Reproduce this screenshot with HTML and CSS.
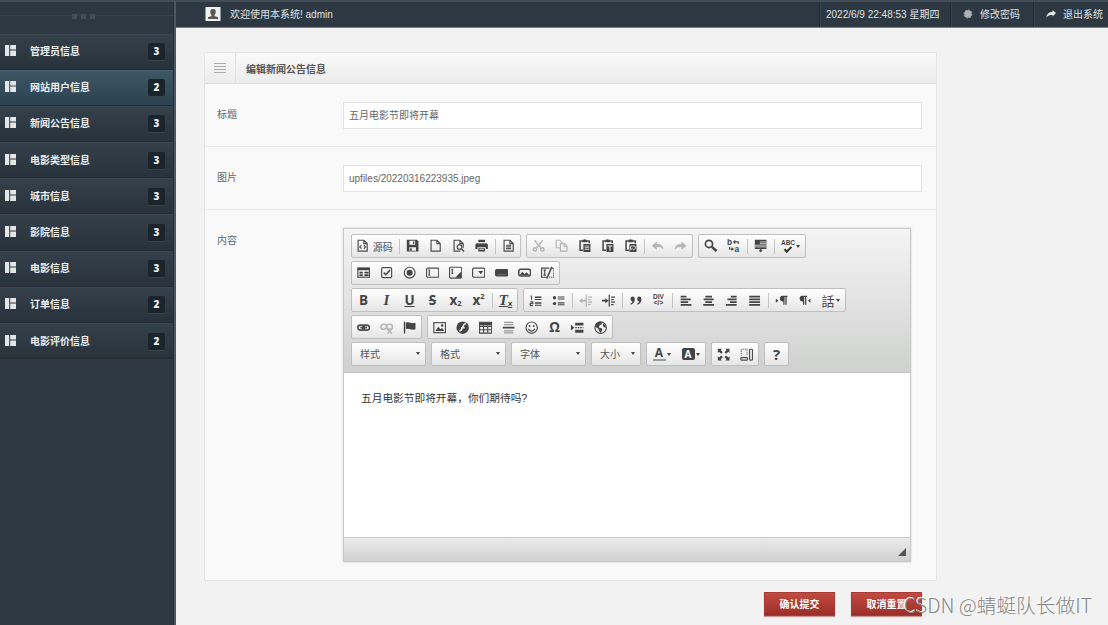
FILE: index.html
```html
<!DOCTYPE html>
<html lang="zh-CN">
<head>
  <meta charset="UTF-8">
  <title>编辑新闻公告信息</title>
  <link rel="stylesheet" href="styles.css">
</head>
<body>

  <!-- icon set -->
  <svg class="sprite" xmlns="http://www.w3.org/2000/svg">
    <symbol id="menu" viewBox="0 0 11 11"><path fill="#e3e5e6" d="M0 0h4.2v11H0zM5.2 0H11v4.5H5.2zM5.2 5.5H11V11H5.2z"/></symbol>
    <symbol id="source" viewBox="0 0 16 16"><path class="l" d="M2.5 1.5h7l4 4v9h-11zM9.5 1.5v4h4"/><path class="l" d="M6.5 7.5 4.5 9.5l2 2M9.5 7.5l2 2-2 2"/></symbol>
    <symbol id="save" viewBox="0 0 16 16"><path d="M1 1h12l2 2v12H1z"/><path fill="#f4f4f4" d="M4 2h7v5H4zM4 10h8v4H4z"/><path d="M8.5 3h1.5v3H8.500zM5 11h2v3H5z"/></symbol>
    <symbol id="newpage" viewBox="0 0 16 16"><path class="l" d="M2.500 1.500h7l4 4v9h-11zM9.500 1.500v4h4"/></symbol>
    <symbol id="preview" viewBox="0 0 16 16"><path class="l" d="M10 14.500H2.500v-13h7l4 4v5M9.500 1.500v4h4"/><circle class="l" cx="9" cy="9.500" r="2.800"/><path class="l b" d="m11 11.500 3.500 3.500"/></symbol>
    <symbol id="print" viewBox="0 0 16 16"><path d="M4 1h8v3H4zM2 5h12l1.500 1.500V12H13v-2H3v2H.5V6.500zM4 11h8v4H4z"/><path stroke="#eee" d="M5.500 12.500h5M4 4.500h8"/></symbol>
    <symbol id="template" viewBox="0 0 16 16"><path class="l" d="M2.500 1.500h7l4 4v9h-11zM9.500 1.500v4h4M5 7.500h6M5 9.500h6M5 11.500h6"/></symbol>
    <symbol id="cut" viewBox="0 0 16 16"><path class="l b" d="M3 1.500 11 11M13 1.500 5 11"/><circle class="l b" cx="3.500" cy="12.500" r="2"/><circle class="l b" cx="12.500" cy="12.500" r="2"/></symbol>
    <symbol id="copy" viewBox="0 0 16 16"><path class="l" d="M6 10.500H1.500v-9H6l3 3v1M6.500 5.500h5l3 3v6h-8zM11 5.500v3.500h3.500"/></symbol>
    <symbol id="paste" viewBox="0 0 16 16"><path class="l b" d="M5 2.500H2.500v11H6M11 2.500h2.500V5"/><path d="M5 1h2l1-1 1 1h2v3H5zM6.500 6h8.500v9.500H6.500z"/></symbol>
    <symbol id="paste1" viewBox="0 0 16 16"><use href="#paste"/><path stroke="#eee" d="M8 8.500h5.500M8 10.500h5.500M8 12.500h5.500"/></symbol>
    <symbol id="paste2" viewBox="0 0 16 16"><use href="#paste"/><path stroke="#eee" stroke-width="1.300" d="M8 8.500h5.500M10.800 8.500v5.500"/></symbol>
    <symbol id="paste3" viewBox="0 0 16 16"><use href="#paste"/><path fill="none" stroke="#eee" d="M8 8.500h5.500v3l-2 1.500-1.500-1.500-2 1.500z"/></symbol>
    <symbol id="undo" viewBox="0 0 16 16"><path d="M1 8l6-5v3c5 0 8 2 8 7-2-3-4-3.500-8-3.500V13z"/></symbol>
    <symbol id="redo" viewBox="0 0 16 16"><path d="M15 8 9 3v3c-5 0-8 2-8 7 2-3 4-3.500 8-3.500V13z"/></symbol>
    <symbol id="find" viewBox="0 0 16 16"><circle cx="6" cy="6" r="4.300" fill="none" stroke="#444" stroke-width="2"/><path stroke="#444" stroke-width="3" d="m9.500 9.500 5.500 5"/></symbol>
    <symbol id="replace" viewBox="0 0 16 16"><text class="letter" x="0" y="7.500">b</text><text class="letter" x="9" y="15.500">a</text><path class="l" d="M9 3.500h4.500V6M3 9.500V12h3"/><path d="M10 1v5L7 3.500zM5.500 9.500v5l3-2.500z"/></symbol>
    <symbol id="selall" viewBox="0 0 16 16"><path d="M1 1h14v11H1z"/><path stroke="#ddd" d="M7 3.500h8M7 5.500h8M1 7.500h14M1 9.500h14"/><path class="l b" d="M8 11v4M6.500 13.500 8 15l1.500-1.500"/></symbol>
    <symbol id="form" viewBox="0 0 16 16"><rect class="l" x="1" y="2.500" width="14" height="11"/><path d="M1 2h14v3H1zM3 7h4v2H3zM9 7h5v2H9zM3 10h4v2H3zM9 10h5v2H9z"/></symbol>
    <symbol id="checkbox" viewBox="0 0 16 16"><rect class="l" x="2" y="2" width="12" height="12" rx="1.500"/><path class="l b" d="m4.500 8 2.500 2.500L12 5"/></symbol>
    <symbol id="radio" viewBox="0 0 16 16"><circle class="l" cx="8" cy="8" r="6.500"/><circle cx="8" cy="8" r="3.600"/></symbol>
    <symbol id="textfield" viewBox="0 0 16 16"><rect class="l" x=".7" y="2.500" width="14.600" height="11" rx="1.500"/><path class="l" d="M3 5h2M3 11h2M4 5v6"/></symbol>
    <symbol id="textarea" viewBox="0 0 16 16"><rect class="l" x=".7" y="1.500" width="14.600" height="13" rx="1.500"/><path class="l" d="M3 4h2M4 4v5M3 9h2"/><path d="M14.500 7v7H7.500z"/></symbol>
    <symbol id="select" viewBox="0 0 16 16"><rect class="l" x=".7" y="2.500" width="14.600" height="11" rx="1.500"/><path d="M7.500 6h6l-3 4z"/></symbol>
    <symbol id="button" viewBox="0 0 16 16"><rect x="0" y="3.500" width="16" height="9" rx="2"/><path stroke="#777" d="M2 10.500h12"/></symbol>
    <symbol id="imgbutton" viewBox="0 0 16 16"><rect class="l b" x=".9" y="4" width="14.200" height="8" rx="2.500"/><path d="M2 11 5 7l3 3 2-2.500L14 11z"/></symbol>
    <symbol id="hidden" viewBox="0 0 16 16"><path class="l" d="M10 2.500H.7v11H7M3 5h3M4.500 5v6M3 11h3"/><path class="l" stroke-dasharray="1.500 1" d="M13 2.500h2.300v11H9"/><path class="l b" d="M13 1 7 15"/></symbol>
    <symbol id="ol" viewBox="0 0 16 16"><path class="l" d="M2 2.500h1V7M1.500 9.500h3v2h-3v2.500h3"/><path d="M7 3h8v1.800H7zM7 6h8v1.200H7zM7 10h8v1.800H7zM7 13h8v1.200H7z"/></symbol>
    <symbol id="ul" viewBox="0 0 16 16"><circle cx="3" cy="4.500" r="2"/><circle cx="3" cy="11.500" r="2"/><path d="M7 3h8v1.300H7zM7 5.300h8v1.300H7zM7 10h8v1.300H7zM7 12.300h8v1.300H7z"/></symbol>
    <symbol id="outdent" viewBox="0 0 16 16"><path d="M0 8l4-3v2h4v2H4v2zM8 1h1.500v14H8zM11 3h5v1.500h-5zM11 6h3v1.500h-3zM11 9h5v1.500h-5zM11 12h3v1.500h-3z"/></symbol>
    <symbol id="indent" viewBox="0 0 16 16"><path d="M8 8 4 5v2H0v2h4v2zM8 1h1.500v14H8zM11 3h5v1.500h-5zM11 6h3v1.500h-3zM11 9h5v1.500h-5zM11 12h3v1.500h-3z"/></symbol>
    <symbol id="quote" viewBox="0 0 16 16"><path d="M4 3a3 3 0 0 1 3 3c0 4-2 6-5 7v-1.500c1.500-.8 2-1.500 2-2.700a3 3 0 0 1 0-5.800zM12 3a3 3 0 0 1 3 3c0 4-2 6-5 7v-1.500c1.500-.8 2-1.500 2-2.700a3 3 0 0 1 0-5.800z"/></symbol>
    <symbol id="left" viewBox="0 0 16 16"><path d="M2 2h7v2.200H2zM2 5.300h12v2.200H2zM2 8.600h9v2.200H2zM2 11.900h13v2.200H2z"/></symbol>
    <symbol id="center" viewBox="0 0 16 16"><path d="M4 2h8v2.200H4zM2 5.300h12v2.200H2zM4 8.600h8v2.200H4zM1.500 11.900h13v2.200h-13z"/></symbol>
    <symbol id="right" viewBox="0 0 16 16"><path d="M7 2h7v2.200H7zM3 5.300h11v2.200H3zM6 8.600h8v2.200H6zM1 11.900h13v2.200H1z"/></symbol>
    <symbol id="justify" viewBox="0 0 16 16"><path d="M1.500 2h13v2.200h-13zM1.500 5.300h13v2.200h-13zM1.500 8.600h13v2.200h-13zM1.500 11.900h13v2.200h-13z"/></symbol>
    <symbol id="ltr" viewBox="0 0 16 16"><path d="M1 5.500v5L4 8z"/><path d="M9 2h6v1.500h-1V13h-1.500V3.500h-1V13H10V9a3.500 3.500 0 0 1-1-7z"/></symbol>
    <symbol id="rtl" viewBox="0 0 16 16"><path d="M15 5.500v5L12 8z"/><path d="M5 2h6v1.500h-1V13H8.500V3.500h-1V13H6V9a3.500 3.500 0 0 1-1-7z"/></symbol>
    <symbol id="link" viewBox="0 0 16 16"><rect class="l b" x="1" y="5" width="8" height="6" rx="3"/><rect class="l b" x="7" y="5" width="8" height="6" rx="3"/><path class="l b" d="M4 8h8"/></symbol>
    <symbol id="unlink" viewBox="0 0 16 16"><rect class="l b" x="1" y="4" width="7" height="6" rx="3"/><rect class="l b" x="8" y="4" width="7" height="6" rx="3"/><path class="l b" d="m9 10 5 5M14 10l-5 5"/></symbol>
    <symbol id="anchor" viewBox="0 0 16 16"><path d="M1 1h1.700v14H1zM3.500 2c4-2 6 2 11.500 0v8c-5 2-7.500-2-11.500 0z"/></symbol>
    <symbol id="image" viewBox="0 0 16 16"><rect class="l" x="1" y="2" width="14" height="12"/><path d="m3 12 3.500-5L9 10l2-1.500 2.500 3.500z"/><circle cx="11" cy="5.500" r="1.500"/></symbol>
    <symbol id="flash" viewBox="0 0 16 16"><circle cx="8" cy="8" r="7.500"/><path fill="none" stroke="#eee" stroke-width="1.800" d="M12 3c-5 0-3 9-8 9M6 8h4.500"/></symbol>
    <symbol id="table" viewBox="0 0 16 16"><path class="l" d="M.7 1.500h14.600v13H.7zM1 6.500h14M1 10.500h14M5.500 5v10M10.500 5v10"/><path d="M.5 1.500h15v3.500H.5z"/></symbol>
    <symbol id="hr" viewBox="0 0 16 16"><path fill="#999" d="M2.500 1h11v1.500h-11zM2.500 3.500h11V5h-11zM2.500 11h11v1.500h-11zM2.500 13.500h11V15h-11z"/><path d="M1 7h14v2H1z"/></symbol>
    <symbol id="smiley" viewBox="0 0 16 16"><circle class="l" cx="8" cy="8" r="6.800"/><circle cx="5.500" cy="6" r="1.100"/><circle cx="10.500" cy="6" r="1.100"/><path class="l" d="M4 9.500c2 3.500 6 3.500 8 0"/></symbol>
    <symbol id="pagebreak" viewBox="0 0 16 16"><path d="M0 4.500v7L4 8zM5 2h10v3.500H5zM5 10.500h10V14H5z"/><path class="l" stroke-dasharray="2 1" d="M5 8h10"/></symbol>
    <symbol id="globe" viewBox="0 0 16 16"><circle class="l" cx="8" cy="8" r="6.900"/><path d="M2 4c2-3 5-3.500 7-2.500L9.500 4 6.500 5.500 6 8l3 .5 1 2-2 4-2-3-1-2.500-3.500-2zM11 3l2.500 2 .8 3-2.300-.5-1.500-2z"/></symbol>
    <symbol id="maximize" viewBox="0 0 16 16"><path d="M1 1h5L4.500 2.500 7 5 5 7 2.500 4.500 1 6zM15 1v5l-1.500-1.500L11 7 9 5l2.500-2.500L10 1zM1 15v-5l1.500 1.500L5 9l2 2-2.500 2.500L6 15zM15 15h-5l1.500-1.500L9 11l2-2 2.500 2.500L15 10z"/></symbol>
    <symbol id="blocks" viewBox="0 0 16 16"><path class="l" stroke-dasharray="1 1" d="M1.500 9V1.500h7V9"/><rect class="l" x="1" y="11.500" width="8" height="3" rx="1"/><rect class="l" x="11.500" y="1.500" width="3.500" height="13" rx="1"/></symbol>
  </svg>

  <div class="layout">
    <aside class="sidebar">
      <div class="handle"><i></i><i></i><i></i></div>
      <ul class="menu">
        <li><svg><use href="#menu"/></svg><span>管理员信息</span><b>3</b></li>
        <li class="active"><svg><use href="#menu"/></svg><span>网站用户信息</span><b>2</b></li>
        <li><svg><use href="#menu"/></svg><span>新闻公告信息</span><b>3</b></li>
        <li><svg><use href="#menu"/></svg><span>电影类型信息</span><b>3</b></li>
        <li><svg><use href="#menu"/></svg><span>城市信息</span><b>3</b></li>
        <li><svg><use href="#menu"/></svg><span>影院信息</span><b>3</b></li>
        <li><svg><use href="#menu"/></svg><span>电影信息</span><b>3</b></li>
        <li><svg><use href="#menu"/></svg><span>订单信息</span><b>2</b></li>
        <li><svg><use href="#menu"/></svg><span>电影评价信息</span><b>2</b></li>
      </ul>
    </aside>

    <div class="page">
      <header class="topbar">
        <svg class="avatar" viewBox="0 0 15 14"><path fill="#f0f0f0" d="M0 0h15v14H0z"/><path fill="#555" d="M7.500 2a2.700 2.700 0 0 1 2.700 3c0 1.500-.6 2.300-1.200 2.900v1l3.500 1.300V12h-10v-1.800L6 8.900v-1C5.400 7.300 4.800 6.500 4.800 5a2.700 2.700 0 0 1 2.700-3z"/></svg>
        <span class="welcome">欢迎使用本系统! admin</span>
        <div class="topnav">
          <span class="time">2022/6/9 22:48:53 星期四</span>
          <span class="pwd"><svg viewBox="0 0 10 10"><circle cx="5" cy="5" r="3.700" fill="#aeb2b5"/><circle cx="5" cy="5" r="4" fill="none" stroke="#aeb2b5" stroke-dasharray="1.600 1.500"/></svg>修改密码</span>
          <span class="exit"><svg viewBox="0 0 10 10"><path fill="#e4e6e8" d="M10 4 6.500 1v2C3 3 .5 5 .5 8.500 2 6.500 3.500 6 6.500 6v1.500z"/></svg>退出系统</span>
        </div>
      </header>

      <main>
        <section class="panel">
          <h1><span class="bars"><i></i><i></i><i></i><i></i></span>编辑新闻公告信息</h1>
          <div class="row">
            <label>标题</label>
            <div class="input">五月电影节即将开幕</div>
          </div>
          <div class="row">
            <label>图片</label>
            <div class="input">upfiles/20220316223935.jpeg</div>
          </div>
          <div class="row row-editor">
            <label>内容</label>
            <div class="editor">
              <div class="toolbar">
                <div class="line">
                  <div class="group">
                    <a class="src"><svg><use href="#source"/></svg>源码</a><s></s>
                    <a><svg><use href="#save"/></svg></a><a><svg><use href="#newpage"/></svg></a><a><svg><use href="#preview"/></svg></a><a><svg><use href="#print"/></svg></a><s></s>
                    <a><svg><use href="#template"/></svg></a>
                  </div>
                  <div class="group">
                    <a class="off"><svg><use href="#cut"/></svg></a><a class="off"><svg><use href="#copy"/></svg></a><a><svg><use href="#paste1"/></svg></a><a><svg><use href="#paste2"/></svg></a><a><svg><use href="#paste3"/></svg></a><s></s>
                    <a class="off"><svg><use href="#undo"/></svg></a><a class="off"><svg><use href="#redo"/></svg></a>
                  </div>
                  <div class="group">
                    <a><svg><use href="#find"/></svg></a><a><svg><use href="#replace"/></svg></a><s></s>
                    <a><svg><use href="#selall"/></svg></a><s></s>
                    <a class="drop"><span class="abc">ABC<svg viewBox="0 0 10 8"><path fill="none" stroke="#333" stroke-width="2.400" d="m1 3.500 2.500 3L9 1"/></svg></span></a>
                  </div>
                </div>
                <div class="line">
                  <div class="group">
                    <a><svg><use href="#form"/></svg></a><a><svg><use href="#checkbox"/></svg></a><a><svg><use href="#radio"/></svg></a><a><svg><use href="#textfield"/></svg></a><a><svg><use href="#textarea"/></svg></a><a><svg><use href="#select"/></svg></a><a><svg><use href="#button"/></svg></a><a><svg><use href="#imgbutton"/></svg></a><a><svg><use href="#hidden"/></svg></a>
                  </div>
                </div>
                <div class="line">
                  <div class="group">
                    <a class="t">B</a><a class="t it">I</a><a class="t un">U</a><a class="t st">S</a><a class="t">x<sub>2</sub></a><a class="t">x<sup>2</sup></a><s></s>
                    <a class="t un"><em>T</em><sub>x</sub></a>
                  </div>
                  <div class="group">
                    <a><svg><use href="#ol"/></svg></a><a><svg><use href="#ul"/></svg></a><s></s>
                    <a class="off"><svg><use href="#outdent"/></svg></a><a><svg><use href="#indent"/></svg></a><s></s>
                    <a><svg><use href="#quote"/></svg></a><a class="div"><span>DIV</span><span>&lt;/&gt;</span></a><s></s>
                    <a><svg><use href="#left"/></svg></a><a><svg><use href="#center"/></svg></a><a><svg><use href="#right"/></svg></a><a><svg><use href="#justify"/></svg></a><s></s>
                    <a><svg><use href="#ltr"/></svg></a><a><svg><use href="#rtl"/></svg></a><a class="drop lang">話</a>
                  </div>
                </div>
                <div class="line">
                  <div class="group">
                    <a><svg><use href="#link"/></svg></a><a class="off"><svg><use href="#unlink"/></svg></a><a><svg><use href="#anchor"/></svg></a>
                  </div>
                  <div class="group">
                    <a><svg><use href="#image"/></svg></a><a><svg><use href="#flash"/></svg></a><a><svg><use href="#table"/></svg></a><a><svg><use href="#hr"/></svg></a><a><svg><use href="#smiley"/></svg></a><a class="t">Ω</a><a><svg><use href="#pagebreak"/></svg></a><a><svg><use href="#globe"/></svg></a>
                  </div>
                </div>
                <div class="line">
                  <div class="group combo">样式</div>
                  <div class="group combo">格式</div>
                  <div class="group combo">字体</div>
                  <div class="group combo small">大小</div>
                  <div class="group">
                    <a class="drop"><span class="color">A</span></a><a class="drop"><span class="bgcolor">A</span></a>
                  </div>
                  <div class="group">
                    <a><svg><use href="#maximize"/></svg></a><a><svg><use href="#blocks"/></svg></a>
                  </div>
                  <div class="group"><a class="t help">?</a></div>
                </div>
              </div>
              <div class="content">五月电影节即将开幕，你们期待吗?</div>
              <div class="bottom"><i></i></div>
            </div>
          </div>
        </section>
        <div class="actions">
          <button>确认提交</button>
          <button>取消重置</button>
        </div>
      </main>
    </div>
  </div>

  <div class="watermark">CSDN @蜻蜓队长做IT</div>
</body>
</html>
```
FILE: styles.css
```css
* {
  box-sizing: border-box;
}

body {
  margin: 0;
  height: 625px;
  overflow: hidden;
  font-family: "Liberation Sans", "Noto Sans CJK SC", sans-serif;
  font-size: 10px;
  background: #f2f2f2;
}

.sprite {
  display: none;
}

.layout {
  display: flex;
  height: 625px;
}

/* sidebar */
.sidebar {
  width: 176px;
  flex: none;
  background: #2e3842;
  border-top: 2px solid #414d57;
  border-right: 2px solid #4c5861;
  box-shadow: inset -1px 0 #25303a;
}

.handle {
  height: 31.500px;
  display: flex;
  justify-content: center;
  gap: 4px;
  padding: 12px 7px 0 0;
  background: linear-gradient(#35414b, #35414b) 0 13px / 100% 1px no-repeat;
}

.handle i {
  width: 5px;
  height: 5px;
  background: #414e58;
}

.menu {
  list-style: none;
  margin: 0;
  padding: 0 1px 0 0;
}

.menu li {
  display: flex;
  align-items: center;
  height: 36.200px;
  padding: 0 8px 2px 5px;
  color: #eceeef;
  font-weight: bold;
  background: linear-gradient(#34404a, #29323b);
  border-top: 1px solid #3a464f;
  border-bottom: 1px solid #242d35;
}

.menu li.active {
  background: linear-gradient(#3e5665, #2c4250);
  border-top-color: #43606f;
}

.menu svg {
  width: 11px;
  height: 11px;
  margin-right: 14px;
}

.menu span {
  flex: 1;
}

.menu b {
  width: 17px;
  height: 17px;
  margin-top: 2px;
  line-height: 16px;
  text-align: center;
  font-family: "Open Sans", sans-serif;
  background: #1b232b;
  border-radius: 2px;
  box-shadow: 0 1px #37434d;
}

/* top bar */
.page {
  flex: 1;
  min-width: 0;
}

.topbar {
  display: flex;
  align-items: center;
  height: 28px;
  padding-left: 29px;
  color: #dfe2e4;
  background: #2e3842;
  border-top: 2px solid #414d57;
  border-bottom: 1px solid #75808a;
}

.avatar {
  width: 16px;
  height: 14px;
  margin: -2px 9px 0 0;
}

.welcome {
  flex: 1;
  margin-top: -2px;
}

.topnav {
  display: flex;
  height: 25px;
  line-height: 25px;
}

.topnav span {
  border-left: 1px solid #222b33;
  box-shadow: inset 1px 0 #37434d;
  white-space: nowrap;
}

.topnav svg {
  width: 10px;
  height: 10px;
  margin-right: 7px;
  vertical-align: -1px;
}

.time {
  width: 131px;
  padding-left: 6px;
}

.pwd {
  width: 83px;
  padding-left: 12px;
}

.exit {
  width: 75px;
  padding-left: 12px;
}

/* form panel */
main {
  padding: 24px 0 0 28px;
}

.panel {
  width: 733px;
  height: 529px;
  background: #f9f9f9;
  border: 1px solid #e3e3e3;
  border-radius: 2px;
}

.panel h1 {
  display: flex;
  align-items: center;
  height: 31px;
  margin: 0;
  font-size: 10px;
  color: #555;
  background: linear-gradient(#fafafa, #ececec);
  border-bottom: 1px solid #dedede;
}

.bars {
  display: flex;
  flex-direction: column;
  justify-content: center;
  gap: 2px;
  width: 31px;
  height: 30px;
  margin-right: 10px;
  padding-left: 9px;
  border-right: 1px solid #e0e0e0;
}

.bars i {
  width: 12px;
  height: 1px;
  background: #aaa;
}

.row {
  display: flex;
  height: 63px;
  padding: 18px 14px 0 12px;
  border-bottom: 1px solid #ebebeb;
}

.row label {
  width: 126px;
  line-height: 25px;
  color: #666;
}

.input {
  flex: 1;
  height: 27px;
  line-height: 26px;
  padding-left: 5px;
  color: #666;
  background: #fff;
  border: 1px solid #e2e2e2;
}

.row-editor {
  height: auto;
  border-bottom: 0;
}

/* editor */
.editor {
  width: 568px;
  height: 334px;
  border: 1px solid #c9c9c9;
  box-shadow: 0 0 2px #ccc;
}

.toolbar {
  height: 144px;
  padding: 5px 7px 0;
  background: linear-gradient(#f4f4f4, #cfd1cf);
  border-bottom: 1px solid #c3c5c3;
}

.line {
  display: flex;
  gap: 5px;
  height: 27.100px;
}

.group {
  display: flex;
  align-items: center;
  height: 24px;
  background: linear-gradient(#fff, #e6e6e6);
  border: 1px solid #bfbfbf;
  border-radius: 2px;
}

.group a {
  display: flex;
  align-items: center;
  justify-content: center;
  width: 23px;
  height: 21px;
  color: #444;
}

.group a > svg {
  width: 13.300px;
  height: 13.300px;
}

.toolbar svg,
.sprite {
  fill: #444;
}

.l {
  fill: none;
  stroke: #4c4c4c;
  stroke-width: 1.400;
}

.b {
  stroke-width: 1.900;
}

.letter {
  font: bold 10px "Liberation Sans", sans-serif;
}

.group s {
  width: 1px;
  height: 15px;
  margin: 0 1.500px;
  background: #c4c4c4;
}

.group .off {
  opacity: .35;
}

.group .src {
  width: 45px;
  gap: 3px;
  color: #555;
}

.group .t {
  font: bold 13.500px "Open Sans", sans-serif;
}

.group .it,
.t em {
  font-family: "Liberation Serif", serif;
  font-style: italic;
  font-size: 15px;
}

.t.un {
  text-decoration: underline;
}

.t.st {
  text-decoration: line-through;
}

.t sub,
.t sup {
  font-size: 7.500px;
  line-height: 1;
}

.t sub {
  margin-top: 7px;
}

.t sup {
  margin-top: -6px;
}

.group .help {
  font-size: 15px;
}

.group .div {
  flex-direction: column;
  font: bold 6.500px/6px "Liberation Sans", sans-serif;
}

.group .drop {
  width: 29px;
  gap: 1px;
}

.drop::after,
.combo::after {
  content: "";
  border: 2.500px solid transparent;
  border-top: 3px solid #444;
  border-bottom: 0;
}

.abc {
  display: flex;
  flex-direction: column;
  align-items: center;
  font: bold 6.500px/6px "Liberation Sans", sans-serif;
}

.abc svg {
  width: 10px;
  height: 7px;
}

.group .lang {
  font-size: 13px;
}

.combo {
  justify-content: space-between;
  width: 75px;
  padding: 0 5px 1px 8px;
  color: #555;
}

.combo.small {
  width: 50px;
}

.color,
.bgcolor {
  width: 13px;
  height: 14px;
  text-align: center;
  font: bold 12px/12px "Open Sans", sans-serif;
}

.color {
  border-bottom: 2px solid #999;
}

.bgcolor {
  height: 12px;
  font-size: 10px;
  color: #fff;
  background: #444;
  border-radius: 2px;
}

.content {
  height: 164px;
  padding: 16px 17px;
  font-size: 10.700px;
  line-height: 18px;
  color: #333;
  background: #fff;
}

.bottom {
  display: flex;
  justify-content: flex-end;
  align-items: flex-end;
  height: 24px;
  padding: 0 4px 5px 0;
  background: linear-gradient(#ebebeb, #cfd1cf);
  border-top: 1px solid #ccc;
}

.bottom i {
  border: 4px solid #555;
  border-top-color: transparent;
  border-left-color: transparent;
}

/* buttons */
.actions {
  display: flex;
  justify-content: flex-end;
  gap: 16px;
  width: 718px;
  padding-top: 11px;
}

.actions button {
  width: 71px;
  height: 24px;
  padding: 0 0 2px;
  font: bold 10px "Liberation Sans", "Noto Sans CJK SC", sans-serif;
  color: #fff;
  background: linear-gradient(#c14b41, #9c2e29);
  border: 1px solid #a83c34;
  box-shadow: 0 1px 1px #c99;
}

.watermark {
  position: absolute;
  top: 592px;
  left: 904px;
  font: 300 19.700px/26px "Noto Sans CJK SC", sans-serif;
  white-space: nowrap;
  color: #858585;
  text-shadow: -1px -1px #fff;
}
```
